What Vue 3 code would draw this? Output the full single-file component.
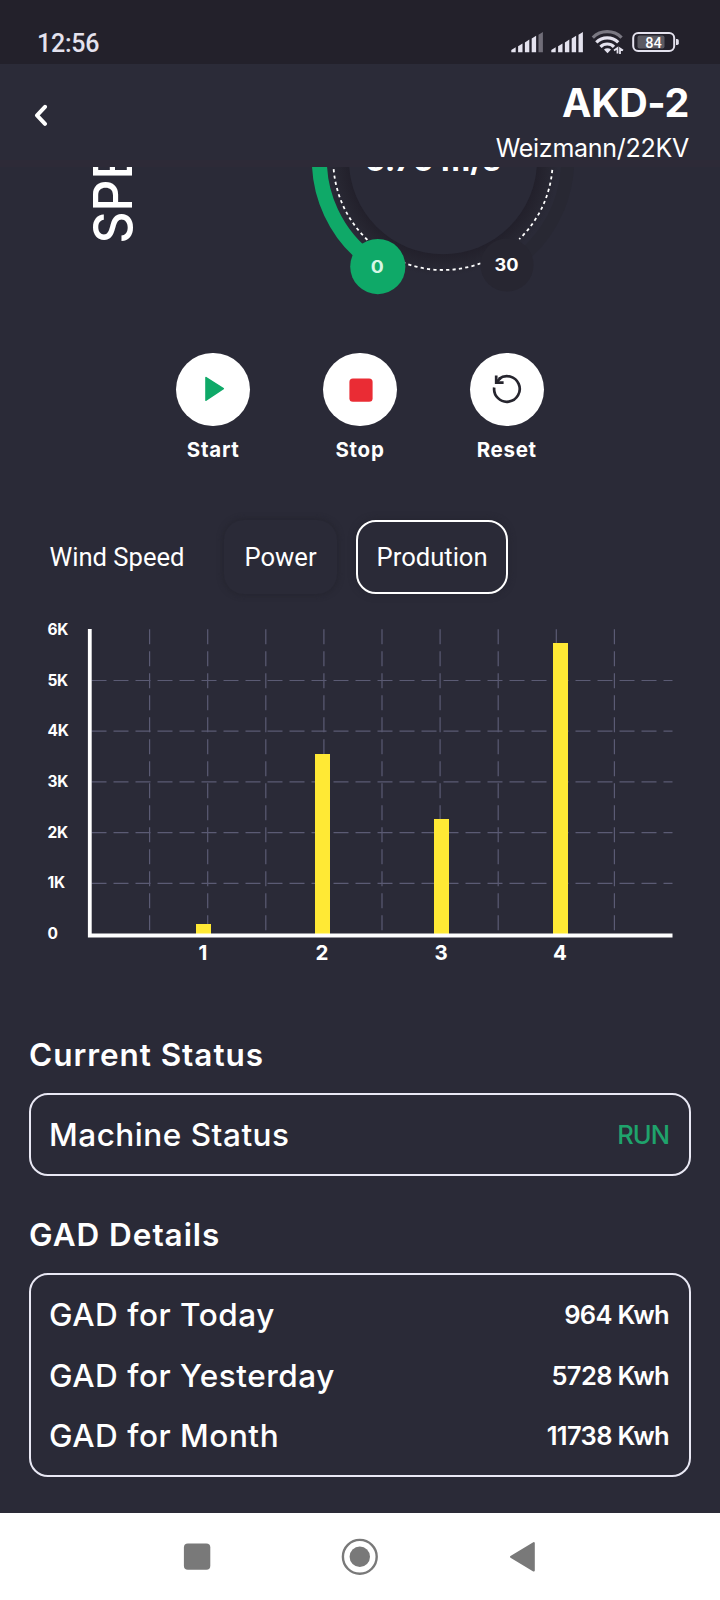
<template>
  <div class="screen">
    <!-- status bar -->
    <div class="status-bar">
      <span class="clock">12:56</span>
      <svg class="status-icons" width="170" height="24" viewBox="0 0 170 24">
        <g v-for="(group, g) in signals" :key="g" fill="#e4e2ee">
          <path
            v-for="(bar, i) in signalBars"
            :key="i"
            :d="bar"
            :transform="`translate(${group.x} 0)`"
            :opacity="i < group.level ? 1 : 0.4"
          />
        </g>
        <g fill="none" stroke="#e4e2ee" stroke-width="3.2">
          <path d="M82.8 7.6 A20.5 20.5 0 0 1 111.6 7.6" opacity="0.45" />
          <path d="M86.3 12.4 A15.5 15.5 0 0 1 108.2 12.4" />
          <path d="M90.5 16.8 A9.5 9.5 0 0 1 104 16.8" />
        </g>
        <path d="M94 19.6 A5 5 0 0 1 101 19.6 L97.5 23.2 Z" fill="#e4e2ee" />
        <path d="M104 20.5 L107.5 18 V23.5 M110 24 V18.5 L113 20.5" fill="none" stroke="#e4e2ee" stroke-width="1.8" />
        <rect x="123.2" y="3" width="41" height="18" rx="5" fill="none" stroke="#e4e2ee" stroke-width="2" />
        <rect x="127.5" y="5.5" width="27" height="13" rx="2" fill="#5b5a62" />
        <path d="M166 9 h1.2 q1.6 0 1.6 1.8 v2.4 q0 1.8 -1.6 1.8 h-1.2 z" fill="#e4e2ee" />
        <text class="battery-level" x="143.5" y="17.5" text-anchor="middle">84</text>
      </svg>
    </div>

    <!-- header -->
    <header class="header">
      <svg class="back" width="14" height="22" viewBox="0 0 14 22">
        <path d="M11 2.8 L3 11.3 L11 19.8" />
      </svg>
      <div class="header-info">
        <h1 class="machine-name">AKD-2</h1>
        <p class="machine-site">Weizmann/22KV</p>
      </div>
    </header>

    <!-- speed gauge, scrolled partly below the header -->
    <svg class="gauge" width="720" height="143" viewBox="0 167 720 143">
      <defs>
        <radialGradient id="ringShade" gradientUnits="userSpaceOnUse" :cx="gauge.cx" :cy="gauge.cy" r="118">
          <stop offset="0.79" stop-color="#22202b" />
          <stop offset="0.88" stop-color="#262530" />
          <stop offset="0.98" stop-color="#2a2a37" />
        </radialGradient>
      </defs>
      <text class="gauge-title" transform="translate(131.5 243.5) rotate(-90) scale(0.92 1)">SPEED</text>
      <path :d="arc(123.5, -10, 55)" fill="none" stroke="#282833" stroke-width="15" />
      <circle :cx="gauge.cx" :cy="gauge.cy" r="118" fill="url(#ringShade)" />
      <circle :cx="gauge.cx" :cy="gauge.cy" r="94" fill="#2a2a37" />
      <path :d="arc(123.5, 120, 190)" fill="none" stroke="#0fa968" stroke-width="15" />
      <path :d="arc(109.7, -5, 46)" class="dotted" />
      <path :d="arc(109.7, 70, 185)" class="dotted" />
      <circle cx="507" cy="265" r="26.5" fill="#272631" />
      <circle cx="377.8" cy="266.6" r="27.6" fill="#0fa968" />
      <text class="gauge-limit low" x="377.3" y="272.5" text-anchor="middle" textLength="13" lengthAdjust="spacingAndGlyphs">0</text>
      <text class="gauge-limit" x="506.5" y="271" text-anchor="middle" textLength="24" lengthAdjust="spacingAndGlyphs">30</text>
      <text class="gauge-value" y="171">
        <tspan x="365">5.75</tspan>
        <tspan x="441">m/s</tspan>
      </text>
    </svg>

    <!-- machine controls -->
    <div class="controls">
      <div v-for="item in controls" :key="item.label" class="control">
        <button class="control-button">
          <svg width="40" height="40" viewBox="0 0 40 40">
            <path
              v-if="item.icon === 'play'"
              d="M13 8.6 L30.3 19.6 L13 31.2 Z"
              fill="#0fa968"
              stroke="#0fa968"
              stroke-width="1.6"
              stroke-linejoin="round"
            />
            <rect v-else-if="item.icon === 'stop'" x="9.4" y="9.6" width="23.2" height="23.2" rx="3.5" fill="#ea2c34" />
            <g v-else fill="none" stroke="#26252e" stroke-width="2.7">
              <path d="M7.2 18.5 A12.8 12.8 0 1 0 12 9.9" />
              <path d="M9.2 6.6 V13.6 H16.6" />
              <path d="M9 13.7 L13.5 9" />
            </g>
          </svg>
        </button>
        <span class="control-label">{{ item.label }}</span>
      </div>
    </div>

    <!-- chart tabs -->
    <nav class="tabs">
      <button
        v-for="tab in tabs"
        :key="tab"
        class="tab"
        :class="{ raised: tab === 'Power', active: tab === activeTab }"
        @click="activeTab = tab"
      >
        {{ tab }}
      </button>
    </nav>

    <!-- production chart -->
    <svg class="chart" width="720" height="370" viewBox="0 610 720 370">
      <g class="grid">
        <line v-for="n in 5" :key="'h' + n" x1="91.5" :y1="yFor(n)" x2="672.5" :y2="yFor(n)" />
        <line v-for="n in 9" :key="'v' + n" :x1="91.5 + n * 58.1" y1="629.3" :x2="91.5 + n * 58.1" y2="934" />
      </g>
      <text v-for="n in 7" :key="'y' + n" class="y-label" x="47.5" :y="yFor(n - 1) + 5">
        {{ n === 1 ? '0' : `${n - 1}K` }}
      </text>
      <rect
        v-for="bar in bars"
        :key="bar.label"
        :x="bar.x"
        :y="bar.top"
        width="15"
        :height="934 - bar.top"
        fill="#ffe935"
      />
      <path d="M89.8 629 V935.5 H672.5" fill="none" stroke="#fff" stroke-width="3.8" />
      <text v-for="bar in bars" :key="'x' + bar.label" class="x-label" :x="bar.x + 7" y="960" text-anchor="middle">
        {{ bar.label }}
      </text>
    </svg>

    <section class="section current">
      <h2 class="section-title">Current Status</h2>
      <div class="card">
        <div class="row">
          <span class="row-label">Machine Status</span>
          <span class="row-value run">RUN</span>
        </div>
      </div>
    </section>

    <section class="section details">
      <h2 class="section-title">GAD Details</h2>
      <div class="card">
        <div v-for="row in gadRows" :key="row.label" class="row">
          <span class="row-label">{{ row.label }}</span>
          <span class="row-value">{{ row.value }}</span>
        </div>
      </div>
    </section>

    <!-- system navigation -->
    <footer class="system-nav">
      <svg width="40" height="40" viewBox="0 0 40 40">
        <rect x="6.9" y="6.4" width="26.4" height="26.4" rx="4" fill="#797979" />
      </svg>
      <svg width="40" height="40" viewBox="0 0 40 40">
        <circle cx="19.8" cy="19.8" r="16.9" fill="none" stroke="#797979" stroke-width="2.4" />
        <circle cx="19.8" cy="19.8" r="10.2" fill="#797979" />
      </svg>
      <svg width="40" height="40" viewBox="0 0 40 40">
        <path d="M8 19.8 L30.8 6 V33.6 Z" fill="#797979" stroke="#797979" stroke-width="2" stroke-linejoin="round" />
      </svg>
    </footer>
  </div>
</template>

<script setup>
import { ref } from 'vue';

const signals = [
  { x: 0, level: 4 },
  { x: 40, level: 5 }
];

// five bars, each a little taller, with a slanted top
const signalBars = [0, 1, 2, 3, 4].map((i) => {
  const x = 1.3 + i * 6.8;
  const top = 18 - i * 3.8;
  return `M${x} 22.3 V${top + 2} L${x + 4.4} ${top - 0.8} V22.3 Z`;
});

const gauge = { cx: 443, cy: 160.3 };

/**
 * Arc path around the gauge centre, angles in degrees, clockwise from 3 o'clock
 */
const arc = (r, from, to) => {
  const point = (deg) => {
    const rad = (deg * Math.PI) / 180;
    return `${gauge.cx + r * Math.cos(rad)} ${gauge.cy + r * Math.sin(rad)}`;
  };
  return `M ${point(from)} A ${r} ${r} 0 0 1 ${point(to)}`;
};

const controls = [
  { label: 'Start', icon: 'play' },
  { label: 'Stop', icon: 'stop' },
  { label: 'Reset', icon: 'reset' }
];

const tabs = ['Wind Speed', 'Power', 'Prodution'];
const activeTab = ref('Prodution');

const bars = [
  { label: '1', x: 196, top: 924 },
  { label: '2', x: 315, top: 754 },
  { label: '3', x: 434, top: 819 },
  { label: '4', x: 553, top: 643 }
];

// y position of a value in thousands
const yFor = (thousands) => 934 - thousands * 50.7;

const gadRows = [
  { label: 'GAD for Today', value: '964 Kwh' },
  { label: 'GAD for Yesterday', value: '5728 Kwh' },
  { label: 'GAD for Month', value: '11738 Kwh' }
];
</script>

<style>
body {
  margin: 0;
  background: #2a2a37;
}
</style>

<style scoped>
.screen {
  width: 720px;
  height: 1600px;
  display: flex;
  flex-direction: column;
  overflow: hidden;
  background: #2a2a37;
  color: #fff;
  font-family: Inter, "Liberation Sans", sans-serif;
}

.status-bar {
  height: 64px;
  flex: none;
  box-sizing: border-box;
  padding: 21px 40px 0 37px;
  display: flex;
  justify-content: space-between;
  background: #23212b;
}

.clock {
  font-family: Roboto, sans-serif;
  font-weight: 500;
  font-size: 25px;
  line-height: 45px;
  letter-spacing: -0.25px;
  color: #e4e2ee;
}

.status-icons {
  margin-top: 9px;
}

.battery-level {
  font: 500 14.5px Roboto, sans-serif;
  fill: #fff;
}

.header {
  height: 103px;
  flex: none;
  box-sizing: border-box;
  padding: 16px 31px 0 34px;
  display: flex;
  justify-content: space-between;
  background: linear-gradient(#2b2b38 0 96px, #2d2a37 96px);
}

.back {
  margin-top: 24px;
  fill: none;
  stroke: #fff;
  stroke-width: 4;
  stroke-linecap: round;
  stroke-linejoin: round;
}

.header-info {
  text-align: right;
}

.machine-name {
  margin: 0;
  font-size: 39.5px;
  font-weight: 700;
  line-height: 47px;
  letter-spacing: -0.4px;
}

.machine-site {
  margin: 5px 0 0;
  font-size: 25px;
  line-height: 32px;
  letter-spacing: -0.27px;
}

.gauge,
.chart {
  display: block;
  flex: none;
}

.gauge-title {
  font-size: 54px;
  font-weight: 500;
  fill: #fff;
}

.gauge-value {
  font-size: 32px;
  font-weight: 700;
  fill: #fff;
}

.gauge-limit {
  font-size: 17px;
  font-weight: 700;
  fill: #fff;
}

.gauge-limit.low {
  fill: #d5f7e6;
}

.dotted {
  fill: none;
  stroke: #fff;
  stroke-width: 1.8;
  stroke-dasharray: 3.2 3.2;
}

.controls {
  margin-top: 42.5px;
  display: flex;
  justify-content: center;
  gap: 73.2px;
}

.control {
  width: 73.6px;
  display: flex;
  flex-direction: column;
  align-items: center;
}

.control-button {
  width: 73.6px;
  height: 73.6px;
  padding: 0;
  border: 0;
  border-radius: 50%;
  display: flex;
  align-items: center;
  justify-content: center;
  background: #fff;
}

.control-label {
  margin-top: 12px;
  font-size: 20.5px;
  font-weight: 700;
  line-height: 24px;
  letter-spacing: 0.7px;
}

.tabs {
  margin: 57.5px 0 0 29px;
  display: flex;
  gap: 19px;
}

.tab {
  height: 74px;
  padding: 0 18.5px;
  border: 2px solid transparent;
  border-radius: 20px;
  background: transparent;
  color: #fff;
  font-family: Roboto, sans-serif;
  font-size: 25.6px;
}

.tab.raised {
  box-shadow: 0 0 5px 2px #262631;
}

.tab.active {
  border-color: #fff;
  box-shadow: 0 0 6px 1px #262631;
}

.chart {
  margin-top: 16px;
}

.grid line {
  stroke: #5b5b74;
  stroke-width: 1.2;
  stroke-dasharray: 15 7;
}

.y-label {
  font-size: 15.5px;
  font-weight: 700;
  letter-spacing: -0.3px;
  fill: #fff;
}

.x-label {
  font-size: 20.5px;
  font-weight: 700;
  fill: #fff;
}

.section {
  padding: 0 29px;
}

.section.current {
  margin-top: 55px;
}

.section.details {
  margin-top: 39px;
}

.section-title {
  margin: 0 0 18px;
  font-size: 31.5px;
  font-weight: 600;
  line-height: 40px;
  letter-spacing: 0.95px;
}

.card {
  box-sizing: border-box;
  height: 83px;
  padding: 10px 20px 0 18px;
  border: 2px solid #e9e8f4;
  border-radius: 19px;
}

.details .card {
  height: 204px;
}

.row {
  height: 60.3px;
  display: flex;
  align-items: center;
  justify-content: space-between;
}

.row-label {
  font-size: 31.5px;
  font-weight: 500;
  letter-spacing: 0.52px;
}

.row-value {
  font-size: 25.5px;
  font-weight: 600;
  letter-spacing: -0.65px;
}

.row-value.run {
  font-weight: 500;
  letter-spacing: -1px;
  color: #1fa36c;
}

.system-nav {
  margin-top: auto;
  height: 87px;
  flex: none;
  display: flex;
  align-items: center;
  justify-content: center;
  gap: 123px;
  background: #fff;
}
</style>
